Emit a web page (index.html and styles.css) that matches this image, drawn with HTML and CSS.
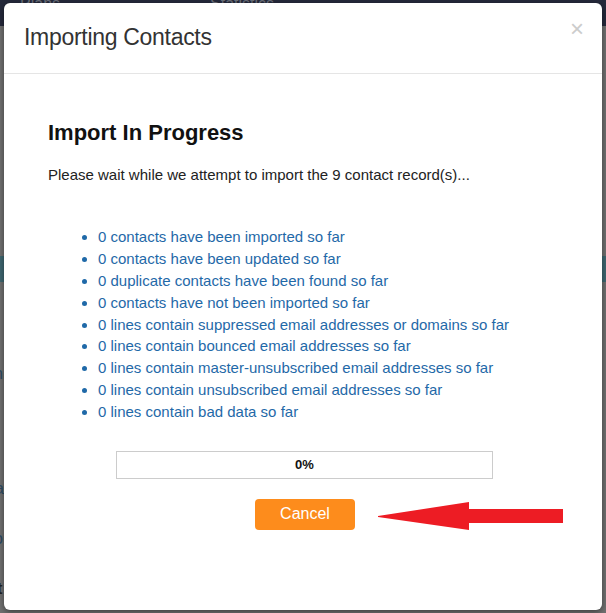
FILE: index.html
```html
<!DOCTYPE html>
<html>
<head>
<meta charset="utf-8">
<link rel="stylesheet" href="styles.css">
</head>
<body>
<div class="page">
  <div class="navbar"><span class="nav-item">Plans</span><span class="nav-item">Statistics</span></div>
  <div class="teal-band"></div>
  <div class="frag f1">n</div>
  <div class="frag f2">a</div>
  <div class="frag f3">o</div>
  <div class="frag f4">t</div>
</div>
<div class="modal">
  <div class="modal-header">
    <h4 class="modal-title">Importing Contacts</h4>
    <span class="close">&times;</span>
  </div>
  <div class="modal-body">
    <h3 class="status-title">Import In Progress</h3>
    <p class="status-text">Please wait while we attempt to import the 9 contact record(s)...</p>
    <ul class="stats">
      <li>0 contacts have been imported so far</li>
      <li>0 contacts have been updated so far</li>
      <li>0 duplicate contacts have been found so far</li>
      <li>0 contacts have not been imported so far</li>
      <li>0 lines contain suppressed email addresses or domains so far</li>
      <li>0 lines contain bounced email addresses so far</li>
      <li>0 lines contain master-unsubscribed email addresses so far</li>
      <li>0 lines contain unsubscribed email addresses so far</li>
      <li>0 lines contain bad data so far</li>
    </ul>
    <div class="progress"><span class="progress-label">0%</span></div>
    <div class="actions"><button class="btn-cancel">Cancel</button></div>
  </div>
  <svg class="arrow" width="190" height="32" viewBox="0 0 190 32">
    <polygon points="0,14 91,0 91,7 185,7 185,21 91,21 91,28 0,15" fill="#ed1c24"/>
  </svg>
</div>
</body>
</html>
```
FILE: styles.css
```css
html, body {
  margin: 0;
  padding: 0;
  width: 606px;
  height: 613px;
  overflow: hidden;
  font-family: "Liberation Sans", Arial, sans-serif;
}
.page {
  position: relative;
  width: 606px;
  height: 613px;
  background: #707070;
}
.navbar {
  height: 26px;
  background: #25293b;
  display: flex;
  gap: 150px;
  padding-left: 20px;
  color: #6b6f7a;
  font-size: 16px;
  line-height: 8px;
}
.teal-band {
  position: absolute;
  left: 0;
  right: 0;
  top: 256px;
  height: 26px;
  background: #3f6771;
}
.frag {
  position: absolute;
  color: #2b4a63;
  font-size: 16px;
}
.f1 { left: -6px; top: 365px; }
.f2 { left: -5px; top: 480px; }
.f3 { left: -6px; top: 530px; }
.f4 { left: -3px; top: 580px; color: #222; font-weight: bold; }
.modal {
  position: absolute;
  left: 4px;
  top: 3px;
  width: 598px;
  height: 607px;
  background: #fff;
  border-radius: 6px;
  box-shadow: 0 2px 6px rgba(0,0,0,0.45);
}
.modal-header {
  position: relative;
  height: 71px;
  border-bottom: 1px solid #e5e5e5;
  box-sizing: border-box;
  padding: 19px 20px 0 20px;
}
.modal-title {
  margin: 0;
  font-weight: normal;
  font-size: 23px;
  line-height: 30px;
  color: #333;
  letter-spacing: -0.3px;
}
.close {
  position: absolute;
  right: 18px;
  top: 12px;
  font-size: 24px;
  color: #ccc;
  line-height: 28px;
}
.modal-body {
  padding: 46px 44px 0 44px;
}
.status-title {
  margin: 0;
  font-size: 22px;
  font-weight: bold;
  color: #111;
  line-height: 26px;
}
.status-text {
  margin: 19px 0 0 0;
  font-size: 15px;
  color: #222;
  line-height: 20px;
}
.stats {
  margin: 41px 0 0 0;
  padding-left: 50px;
  font-size: 15px;
  line-height: 21.875px;
  color: #1f69a8;
}
.progress {
  margin: 28px 0 0 68px;
  width: 377px;
  height: 28px;
  box-sizing: border-box;
  border: 1px solid #ccc;
  display: flex;
  align-items: center;
  justify-content: center;
}
.progress-label {
  font-size: 13px;
  font-weight: bold;
  color: #111;
}
.actions {
  display: flex;
  justify-content: center;
  margin-top: 20px;
  padding-left: 4px;
}
.btn-cancel {
  width: 100px;
  height: 31px;
  background: #fd8c1c;
  border: none;
  border-radius: 4px;
  color: #fff;
  font-family: "Liberation Sans", Arial, sans-serif;
  font-size: 16px;
  padding: 0;
}
.arrow {
  position: absolute;
  left: 374px;
  top: 499px;
}
```
